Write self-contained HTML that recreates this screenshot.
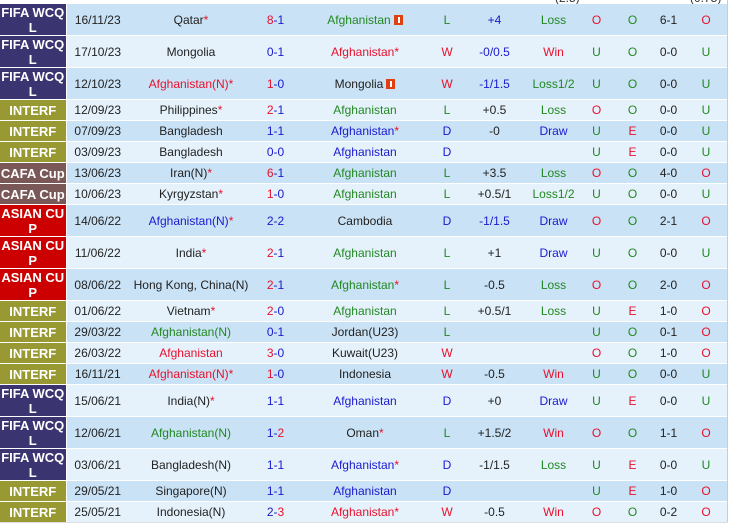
<!DOCTYPE html>
<html><head><meta charset="utf-8"><style>
body{margin:0;width:731px;height:527px;background:#fff;overflow:hidden;font-family:"Liberation Sans",Arial,sans-serif;position:relative}
.hd{position:absolute;top:-9px;font-size:12px;color:#333}
table{position:absolute;left:0;top:4px;width:727px;border-collapse:collapse;table-layout:fixed;font-size:12px}
td{text-align:center;padding:0;white-space:nowrap;overflow:hidden;color:#222;border-bottom:1px solid #fff}
tr.a td{background:#c9e2f5}tr.b td{background:#e5f2fb}
td.lg{color:#fff;font-weight:bold;font-size:13px;line-height:15px;border-right:1px solid #fff}
tr.t td{height:31px}tr.s td{height:20px}
.F{background:#3a3570!important}.I{background:#999933!important}.C{background:#7a5858!important}.A{background:#cc0000!important}
.r{color:#e8112d}.g{color:#228822}.u{color:#1a1ad0}.k{color:#222}
.ic{display:inline-block;width:9px;height:10px;background:#e04010;vertical-align:-1px;margin-left:3px;position:relative}
.ic:after{content:"";position:absolute;left:4px;top:2px;width:2px;height:6px;background:#fff}
.edge{position:absolute;left:727px;top:0;width:1px;height:523px;background:#ccc}
.bot{position:absolute;left:0;top:522px;width:728px;height:1px;background:#ddd}
</style></head><body>
<div class="hd" style="left:555px">(2.5)</div><div class="hd" style="left:690px">(0.75)</div>
<table>
<colgroup><col style="width:66px"><col style="width:63px"><col style="width:124px"><col style="width:45px"><col style="width:134px"><col style="width:30px"><col style="width:65px"><col style="width:53px"><col style="width:33px"><col style="width:39px"><col style="width:33px"><col style="width:42px"></colgroup>
<tr class="a t"><td class="lg F">FIFA WCQ<br>L</td><td>16/11/23</td><td>Qatar<span class="r">*</span></td><td><span class="r">8</span><span class="u">-1</span></td><td class="g">Afghanistan<span class="ic"></span></td><td class="g">L</td><td class="u">+4</td><td class="g">Loss</td><td class="r">O</td><td class="g">O</td><td>6-1</td><td class="r">O</td></tr>
<tr class="b t"><td class="lg F">FIFA WCQ<br>L</td><td>17/10/23</td><td>Mongolia</td><td class="u">0-1</td><td class="r">Afghanistan*</td><td class="r">W</td><td class="u">-0/0.5</td><td class="r">Win</td><td class="g">U</td><td class="g">O</td><td>0-0</td><td class="g">U</td></tr>
<tr class="a t"><td class="lg F">FIFA WCQ<br>L</td><td>12/10/23</td><td class="r">Afghanistan(N)*</td><td><span class="r">1</span><span class="u">-0</span></td><td>Mongolia<span class="ic"></span></td><td class="r">W</td><td class="u">-1/1.5</td><td class="g">Loss1/2</td><td class="g">U</td><td class="g">O</td><td>0-0</td><td class="g">U</td></tr>
<tr class="b s"><td class="lg I">INTERF</td><td>12/09/23</td><td>Philippines<span class="r">*</span></td><td><span class="r">2</span><span class="u">-1</span></td><td class="g">Afghanistan</td><td class="g">L</td><td>+0.5</td><td class="g">Loss</td><td class="r">O</td><td class="g">O</td><td>0-0</td><td class="g">U</td></tr>
<tr class="a s"><td class="lg I">INTERF</td><td>07/09/23</td><td>Bangladesh</td><td class="u">1-1</td><td class="u">Afghanistan<span class="r">*</span></td><td class="u">D</td><td>-0</td><td class="u">Draw</td><td class="g">U</td><td class="r">E</td><td>0-0</td><td class="g">U</td></tr>
<tr class="b s"><td class="lg I">INTERF</td><td>03/09/23</td><td>Bangladesh</td><td class="u">0-0</td><td class="u">Afghanistan</td><td class="u">D</td><td></td><td></td><td class="g">U</td><td class="r">E</td><td>0-0</td><td class="g">U</td></tr>
<tr class="a s"><td class="lg C">CAFA Cup</td><td>13/06/23</td><td>Iran(N)<span class="r">*</span></td><td><span class="r">6</span><span class="u">-1</span></td><td class="g">Afghanistan</td><td class="g">L</td><td>+3.5</td><td class="g">Loss</td><td class="r">O</td><td class="g">O</td><td>4-0</td><td class="r">O</td></tr>
<tr class="b s"><td class="lg C">CAFA Cup</td><td>10/06/23</td><td>Kyrgyzstan<span class="r">*</span></td><td><span class="r">1</span><span class="u">-0</span></td><td class="g">Afghanistan</td><td class="g">L</td><td>+0.5/1</td><td class="g">Loss1/2</td><td class="g">U</td><td class="g">O</td><td>0-0</td><td class="g">U</td></tr>
<tr class="a t"><td class="lg A">ASIAN CU<br>P</td><td>14/06/22</td><td class="u">Afghanistan(N)<span class="r">*</span></td><td class="u">2-2</td><td>Cambodia</td><td class="u">D</td><td class="u">-1/1.5</td><td class="u">Draw</td><td class="r">O</td><td class="g">O</td><td>2-1</td><td class="r">O</td></tr>
<tr class="b t"><td class="lg A">ASIAN CU<br>P</td><td>11/06/22</td><td>India<span class="r">*</span></td><td><span class="r">2</span><span class="u">-1</span></td><td class="g">Afghanistan</td><td class="g">L</td><td>+1</td><td class="u">Draw</td><td class="g">U</td><td class="g">O</td><td>0-0</td><td class="g">U</td></tr>
<tr class="a t"><td class="lg A">ASIAN CU<br>P</td><td>08/06/22</td><td>Hong Kong, China(N)</td><td><span class="r">2</span><span class="u">-1</span></td><td class="g">Afghanistan<span class="r">*</span></td><td class="g">L</td><td>-0.5</td><td class="g">Loss</td><td class="r">O</td><td class="g">O</td><td>2-0</td><td class="r">O</td></tr>
<tr class="b s"><td class="lg I">INTERF</td><td>01/06/22</td><td>Vietnam<span class="r">*</span></td><td><span class="r">2</span><span class="u">-0</span></td><td class="g">Afghanistan</td><td class="g">L</td><td>+0.5/1</td><td class="g">Loss</td><td class="g">U</td><td class="r">E</td><td>1-0</td><td class="r">O</td></tr>
<tr class="a s"><td class="lg I">INTERF</td><td>29/03/22</td><td class="g">Afghanistan(N)</td><td class="u">0-1</td><td>Jordan(U23)</td><td class="g">L</td><td></td><td></td><td class="g">U</td><td class="g">O</td><td>0-1</td><td class="r">O</td></tr>
<tr class="b s"><td class="lg I">INTERF</td><td>26/03/22</td><td class="r">Afghanistan</td><td><span class="r">3</span><span class="u">-0</span></td><td>Kuwait(U23)</td><td class="r">W</td><td></td><td></td><td class="r">O</td><td class="g">O</td><td>1-0</td><td class="r">O</td></tr>
<tr class="a s"><td class="lg I">INTERF</td><td>16/11/21</td><td class="r">Afghanistan(N)*</td><td><span class="r">1</span><span class="u">-0</span></td><td>Indonesia</td><td class="r">W</td><td>-0.5</td><td class="r">Win</td><td class="g">U</td><td class="g">O</td><td>0-0</td><td class="g">U</td></tr>
<tr class="b t"><td class="lg F">FIFA WCQ<br>L</td><td>15/06/21</td><td>India(N)<span class="r">*</span></td><td class="u">1-1</td><td class="u">Afghanistan</td><td class="u">D</td><td>+0</td><td class="u">Draw</td><td class="g">U</td><td class="r">E</td><td>0-0</td><td class="g">U</td></tr>
<tr class="a t"><td class="lg F">FIFA WCQ<br>L</td><td>12/06/21</td><td class="g">Afghanistan(N)</td><td><span class="u">1-</span><span class="r">2</span></td><td>Oman<span class="r">*</span></td><td class="g">L</td><td>+1.5/2</td><td class="r">Win</td><td class="r">O</td><td class="g">O</td><td>1-1</td><td class="r">O</td></tr>
<tr class="b t"><td class="lg F">FIFA WCQ<br>L</td><td>03/06/21</td><td>Bangladesh(N)</td><td class="u">1-1</td><td class="u">Afghanistan<span class="r">*</span></td><td class="u">D</td><td>-1/1.5</td><td class="g">Loss</td><td class="g">U</td><td class="r">E</td><td>0-0</td><td class="g">U</td></tr>
<tr class="a s"><td class="lg I">INTERF</td><td>29/05/21</td><td>Singapore(N)</td><td class="u">1-1</td><td class="u">Afghanistan</td><td class="u">D</td><td></td><td></td><td class="g">U</td><td class="r">E</td><td>1-0</td><td class="r">O</td></tr>
<tr class="b s"><td class="lg I">INTERF</td><td>25/05/21</td><td>Indonesia(N)</td><td><span class="u">2-</span><span class="r">3</span></td><td class="r">Afghanistan*</td><td class="r">W</td><td>-0.5</td><td class="r">Win</td><td class="r">O</td><td class="g">O</td><td>0-2</td><td class="r">O</td></tr>
</table>
<div class="edge"></div><div class="bot"></div>
</body></html>
